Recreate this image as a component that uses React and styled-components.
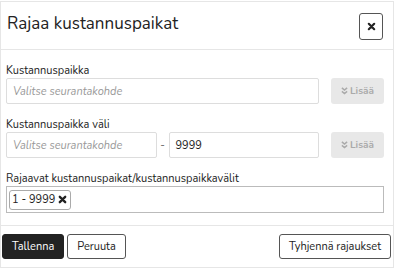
import React from "react";
import styled, { createGlobalStyle } from "styled-components";

const GlobalStyle = createGlobalStyle`
  html, body {
    margin: 0;
    padding: 0;
    background: #fff;
  }
  body {
    font-family: Nunito, Lato, "Open Sans", sans-serif;
    color: #222;
  }
`;

const Modal = styled.div`
  width: 394px;
  margin: 1px 0 0 0;
  border: 1px solid #e6e6e6;
  box-sizing: border-box;
`;

const Header = styled.div`
  display: flex;
  align-items: center;
  justify-content: space-between;
  height: 48px;
  padding: 0 10px 0 6px;
  border-bottom: 1px solid #e6e6e6;
  box-sizing: border-box;
`;

const Title = styled.div`
  font-size: 17px;
  color: #222;
  margin-top: -5px;
`;

const CloseButton = styled.div`
  width: 24px;
  height: 27px;
  box-sizing: border-box;
  border: 1px solid #555;
  border-radius: 3px;
  display: flex;
  align-items: center;
  justify-content: center;
  margin-top: 2px;
`;

const Body = styled.div`
  padding: 14px 9px 12px 5px;
  display: flex;
  flex-direction: column;
`;

const Label = styled.div`
  font-size: 11px;
  color: #222;
  margin-top: ${(p) => p.$top || 0}px;
  margin-bottom: 1px;
  line-height: 13px;
`;

const Row = styled.div`
  display: flex;
  align-items: center;
`;

const Input = styled.div`
  flex: 1;
  height: 26px;
  border: 1px solid #ddd;
  border-radius: 2px;
  box-sizing: border-box;
  display: flex;
  align-items: center;
  padding-left: 6px;
  font-size: 11px;
  color: ${(p) => (p.$placeholder ? "#999" : "#222")};
  font-style: ${(p) => (p.$placeholder ? "italic" : "normal")};
  white-space: nowrap;
  overflow: hidden;
`;

const Dash = styled.div`
  width: 12px;
  text-align: center;
  font-size: 11px;
  color: #777;
`;

const AddButton = styled.div`
  width: 53px;
  height: 26px;
  margin-left: 12px;
  background: #e8e8e8;
  border-radius: 3px;
  display: flex;
  align-items: center;
  justify-content: center;
  gap: 2px;
  font-size: 10px;
  font-weight: 700;
  color: #aaa;
`;

const MultiBox = styled.div`
  height: 27px;
  border: 1px solid #bbb;
  box-sizing: border-box;
  display: flex;
  align-items: center;
  padding-left: 2px;
`;

const Chip = styled.div`
  height: 20px;
  border: 1px solid #aaa;
  border-radius: 3px;
  box-sizing: border-box;
  display: flex;
  align-items: center;
  gap: 3px;
  padding: 0 3px 0 2px;
  font-size: 11px;
  color: #222;
`;

const Footer = styled.div`
  border-top: 1px solid #e6e6e6;
  padding: 8px 2px 8px 1px;
  display: flex;
  align-items: center;
  justify-content: space-between;
`;

const ButtonGroup = styled.div`
  display: flex;
  gap: 3px;
`;

const Button = styled.div`
  height: 25px;
  box-sizing: border-box;
  padding: 0 9px;
  border-radius: 3px;
  display: flex;
  align-items: center;
  font-size: 11px;
  background: ${(p) => (p.$primary ? "#222" : "#fff")};
  color: ${(p) => (p.$primary ? "#fff" : "#222")};
  border: 1px solid ${(p) => (p.$primary ? "#222" : "#555")};
`;

function Cross({ size = 8, weight = 2.2 }) {
  return (
    <svg width={size} height={size} viewBox="0 0 10 10">
      <path d="M2 2 L8 8 M8 2 L2 8" stroke="#222" strokeWidth={weight} strokeLinecap="round" />
    </svg>
  );
}

function Chevrons() {
  return (
    <svg width="7" height="8" viewBox="0 0 8 9">
      <path d="M1 1 L4 3.5 L7 1 M1 5 L4 7.5 L7 5" stroke="#aaa" strokeWidth="1.7" fill="none" />
    </svg>
  );
}

export default function App() {
  return (
    <>
      <GlobalStyle />
      <Modal>
        <Header>
          <Title>Rajaa kustannuspaikat</Title>
          <CloseButton>
            <Cross size={9} weight={2.4} />
          </CloseButton>
        </Header>
        <Body>
          <Label>Kustannuspaikka</Label>
          <Row>
            <Input $placeholder>Valitse seurantakohde</Input>
            <AddButton>
              <Chevrons />
              Lisää
            </AddButton>
          </Row>
          <Label $top={14}>Kustannuspaikka väli</Label>
          <Row>
            <Input $placeholder>Valitse seurantakohde</Input>
            <Dash>-</Dash>
            <Input>9999</Input>
            <AddButton>
              <Chevrons />
              Lisää
            </AddButton>
          </Row>
          <Label $top={14}>Rajaavat kustannuspaikat/kustannuspaikkavälit</Label>
          <MultiBox>
            <Chip>
              1 - 9999
              <Cross size={9} weight={2.6} />
            </Chip>
          </MultiBox>
        </Body>
        <Footer>
          <ButtonGroup>
            <Button $primary>Tallenna</Button>
            <Button>Peruuta</Button>
          </ButtonGroup>
          <Button>Tyhjennä rajaukset</Button>
        </Footer>
      </Modal>
    </>
  );
}
